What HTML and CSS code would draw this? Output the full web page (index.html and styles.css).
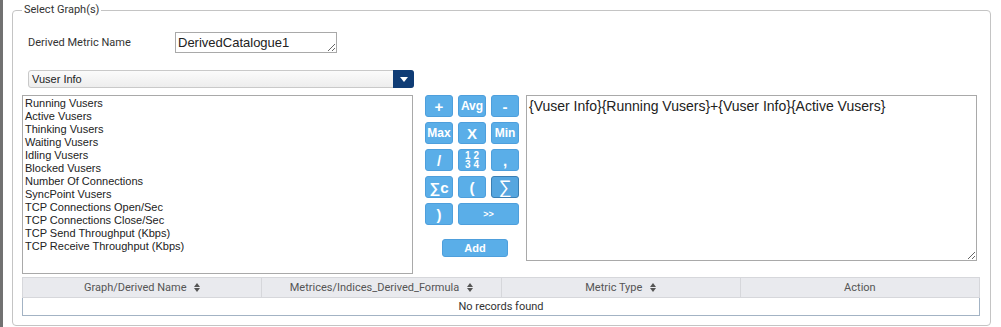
FILE: index.html
```html
<!DOCTYPE html>
<html lang="en">
<head>
  <meta charset="UTF-8" />
  <title>Derived Metrics</title>
  <link rel="stylesheet" href="styles.css">
</head>
<body>
  <div class="page">
    <div class="edge"></div>

    <fieldset class="graph-box">
      <legend>Select Graph(s)</legend>

      <!-- name of the derived metric -->
      <div class="name-row">
        <label class="name-label">Derived Metric Name</label>
        <textarea class="name-input">DerivedCatalogue1</textarea>
      </div>

      <div class="group-select">
        <span class="group-value">Vuser Info</span>
        <span class="group-arrow">
          <svg width="8" height="5" viewBox="0 0 8 5"><path d="M0 0 L8 0 L4 5 Z" fill="#fff"/></svg>
        </span>
      </div>

      <div class="builder">
        <div class="metric-list">
          <div>Running Vusers</div>
          <div>Active Vusers</div>
          <div>Thinking Vusers</div>
          <div>Waiting Vusers</div>
          <div>Idling Vusers</div>
          <div>Blocked Vusers</div>
          <div>Number Of Connections</div>
          <div>SyncPoint Vusers</div>
          <div>TCP Connections Open/Sec</div>
          <div>TCP Connections Close/Sec</div>
          <div>TCP Send Throughput (Kbps)</div>
          <div>TCP Receive Throughput (Kbps)</div>
        </div>

        <div class="ops">
          <div class="op-grid">
            <button class="op op-big">+</button>
            <button class="op">Avg</button>
            <button class="op op-big">-</button>
            <button class="op">Max</button>
            <button class="op op-big">X</button>
            <button class="op">Min</button>
            <button class="op op-big">/</button>
            <button class="op op-frac"><span>1 2</span><span>3 4</span></button>
            <button class="op op-big">,</button>
            <button class="op op-big">∑c</button>
            <button class="op op-big">(</button>
            <button class="op op-sum op-active">∑</button>
            <button class="op op-big">)</button>
            <button class="op op-wide">&gt;&gt;</button>
          </div>
          <button class="add-btn">Add</button>
        </div>

        <textarea class="formula">{Vuser Info}{Running Vusers}+{Vuser Info}{Active Vusers}</textarea>
      </div>

      <table class="records">
        <thead>
          <tr>
            <th>Graph/Derived Name <svg class="sort" width="6" height="9" viewBox="0 0 6 9"><path d="M0 4 L3 0 L6 4 Z M0 5 L6 5 L3 9 Z" fill="#555"/></svg></th>
            <th>Metrices/Indices_Derived_Formula <svg class="sort" width="6" height="9" viewBox="0 0 6 9"><path d="M0 4 L3 0 L6 4 Z M0 5 L6 5 L3 9 Z" fill="#555"/></svg></th>
            <th>Metric Type <svg class="sort" width="6" height="9" viewBox="0 0 6 9"><path d="M0 4 L3 0 L6 4 Z M0 5 L6 5 L3 9 Z" fill="#555"/></svg></th>
            <th>Action</th>
          </tr>
        </thead>
        <tbody>
          <tr>
            <td colspan="4">No records found</td>
          </tr>
        </tbody>
      </table>
    </fieldset>
  </div>
</body>
</html>
```

FILE: styles.css
```css
body {
  margin: 0;
  background: #fff;
  font-family: Roboto, "Liberation Sans", sans-serif;
  color: #333;
}

.page {
  display: flex;
  height: 327px;
}

.edge {
  width: 3px;
  background: #717171;
}

/* main box */
.graph-box {
  flex: 1;
  min-width: 0;
  margin: 3px 10px 0 9px;
  padding: 0 10px 9px 9px;
  border: 1px solid #c4c4c4;
  border-radius: 4px;
  align-self: flex-start;
}

.graph-box legend {
  font-size: 11px;
  line-height: 14px;
  padding: 0 2px;
  color: #333;
}

.name-row {
  display: flex;
  align-items: center;
  margin: 15px 0 0 6px;
  height: 21px;
}

.name-label {
  width: 147px;
  font-size: 11px;
  color: #333;
}

.name-input {
  box-sizing: border-box;
  width: 162px;
  height: 21px;
  margin: 0;
  padding: 1px 2px 0;
  border: 1px solid #a9a9a9;
  font-family: "Liberation Sans", sans-serif;
  font-size: 13px;
  line-height: 17px;
  color: #222;
  overflow: hidden;
}

.group-select {
  box-sizing: border-box;
  display: flex;
  justify-content: space-between;
  align-items: stretch;
  width: 386px;
  height: 18px;
  margin: 17px 0 0 6px;
  border: 1px solid #c9c9c9;
  border-radius: 3px;
  background: linear-gradient(#fbfbfb, #ededed);
}

.group-value {
  padding-left: 3px;
  font-family: "Liberation Sans", sans-serif;
  font-size: 11px;
  line-height: 16px;
  color: #222;
}

.group-arrow {
  display: flex;
  align-items: center;
  justify-content: center;
  width: 21px;
  margin: -1px -1px -1px 0;
  background: #0f3c75;
  border-radius: 0 3px 3px 0;
}

.builder {
  display: flex;
  align-items: flex-start;
  margin-top: 7px;
}

.metric-list {
  box-sizing: border-box;
  width: 391px;
  height: 179px;
  padding: 1px 2px;
  border: 1px solid #a9a9a9;
  font-family: "Liberation Sans", sans-serif;
  font-size: 11px;
  line-height: 13px;
  color: #222;
}

.ops {
  width: 94px;
  margin-left: 12px;
}

.op-grid {
  display: grid;
  grid-template-columns: repeat(3, 28px);
  grid-auto-rows: 22px;
  gap: 5px;
}

.op,
.add-btn {
  box-sizing: border-box;
  margin: 0;
  padding: 0;
  border: 1px solid #4e9fdc;
  border-radius: 3px;
  background: #5aaee8;
  color: #fff;
  font-family: "Liberation Sans", sans-serif;
  font-weight: bold;
  font-size: 12px;
  cursor: pointer;
}

.op-big {
  font-size: 15px;
}

.op-sum {
  font-size: 18px;
  font-weight: normal;
}

.op-active {
  border-color: #3b7fb4;
  background: #56a6df;
}

.op-wide {
  grid-column: span 2;
  font-size: 9px;
}

.op-frac {
  display: flex;
  flex-direction: column;
  align-items: center;
  justify-content: center;
  font-size: 10px;
  line-height: 9px;
}

.add-btn {
  display: block;
  width: 66px;
  height: 18px;
  margin: 14px 0 0 17px;
  font-size: 11px;
}

.formula {
  box-sizing: border-box;
  width: 451px;
  height: 166px;
  margin: 0 0 0 7px;
  padding: 2px 2px;
  border: 1px solid #a9a9a9;
  font-family: "Liberation Sans", sans-serif;
  font-size: 14px;
  line-height: 17px;
  color: #222;
}

/* records table */
.records {
  width: 100%;
  margin-top: 3px;
  border-collapse: collapse;
  table-layout: fixed;
  font-size: 11px;
}

.records th {
  height: 19px;
  padding: 0;
  background: #e9eaee;
  border: 1px solid #d6d7db;
  font-weight: normal;
  color: #555;
}

.records td {
  height: 17px;
  padding: 0;
  border: 1px solid #a3b3c4;
  text-align: center;
  color: #333;
}

.sort {
  margin-left: 5px;
  vertical-align: -1px;
}
```
